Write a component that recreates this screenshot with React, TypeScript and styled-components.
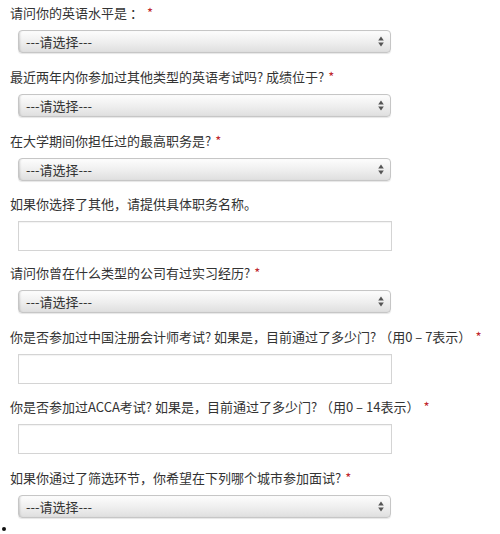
import styled, { createGlobalStyle } from "styled-components"

const GlobalStyle = createGlobalStyle`
  body {
    margin: 0;
    background: #fff;
    font-family: "Noto Sans CJK SC", "Liberation Sans", sans-serif;
    color: #333;
  }
`

const Form = styled.div`
  padding: 4px 0 0 10px;
  width: 490px;
  box-sizing: border-box;
`

const Field = styled.div<{ $gap: number }>`
  margin-bottom: ${(p) => p.$gap}px;
`

const Label = styled.div`
  font-size: 13px;
  line-height: 18px;
  margin-bottom: 8px;
  white-space: nowrap;
  color: #333;
`

const Star = styled.span`
  color: #c0282d;
  margin-left: 4px;
`

const SelectBox = styled.div`
  margin-left: 8px;
  width: 373px;
  height: 23px;
  box-sizing: border-box;
  border: 1px solid #c6c6c6;
  border-radius: 4px;
  background: linear-gradient(to bottom, #fdfdfd 0%, #eeeeee 55%, #dfdfdf 100%);
  box-shadow: inset 2px 0 2px -1px rgba(0, 0, 0, 0.15), 0 1px 1px rgba(0, 0, 0, 0.1);
  display: flex;
  align-items: center;
  justify-content: space-between;
  padding: 0 6px 0 7px;
  font-size: 13px;
  color: #333;
`

const TextBox = styled.div`
  margin-left: 8px;
  width: 374px;
  height: 30px;
  box-sizing: border-box;
  border: 1px solid #d4d4d4;
  background: #fff;
  box-shadow: inset 0 1px 1px rgba(0, 0, 0, 0.05);
`

const Bullet = styled.div`
  width: 4px;
  height: 4px;
  border-radius: 50%;
  background: #111;
  margin: 1px 0 0 2px;
`

const Arrows = () => (
  <svg width="6" height="11" viewBox="0 0 6 11">
    <path d="M3 0.5 L5.8 4.5 L0.2 4.5 Z" fill="#555" />
    <path d="M3 10.5 L5.8 6.5 L0.2 6.5 Z" fill="#555" />
  </svg>
)

type Item = { label: string; kind: "select" | "text"; gap: number }

const items: Item[] = [
  { label: "请问你的英语水平是 ：", kind: "select", gap: 15 },
  { label: "最近两年内你参加过其他类型的英语考试吗? 成绩位于?", kind: "select", gap: 15 },
  { label: "在大学期间你担任过的最高职务是?", kind: "select", gap: 14 },
  { label: "如果你选择了其他，请提供具体职务名称。", kind: "text", gap: 13 },
  { label: "请问你曾在什么类型的公司有过实习经历?", kind: "select", gap: 15 },
  { label: "你是否参加过中国注册会计师考试? 如果是，目前通过了多少门? （用0 – 7表示）", kind: "text", gap: 14 },
  { label: "你是否参加过ACCA考试? 如果是，目前通过了多少门? （用0 – 14表示）", kind: "text", gap: 15 },
  { label: "如果你通过了筛选环节，你希望在下列哪个城市参加面试?", kind: "select", gap: 9 },
]

const required = new Set([0, 1, 2, 4, 5, 6, 7])

export default function App() {
  return (
    <>
      <GlobalStyle />
      <Form>
        {items.map((it, i) => (
          <Field key={i} $gap={it.gap}>
            <Label>
              {it.label}
              {required.has(i) && <Star>*</Star>}
            </Label>
            {it.kind === "select" ? (
              <SelectBox>
                <span>---请选择---</span>
                <Arrows />
              </SelectBox>
            ) : (
              <TextBox />
            )}
          </Field>
        ))}
      </Form>
      <Bullet />
    </>
  )
}
